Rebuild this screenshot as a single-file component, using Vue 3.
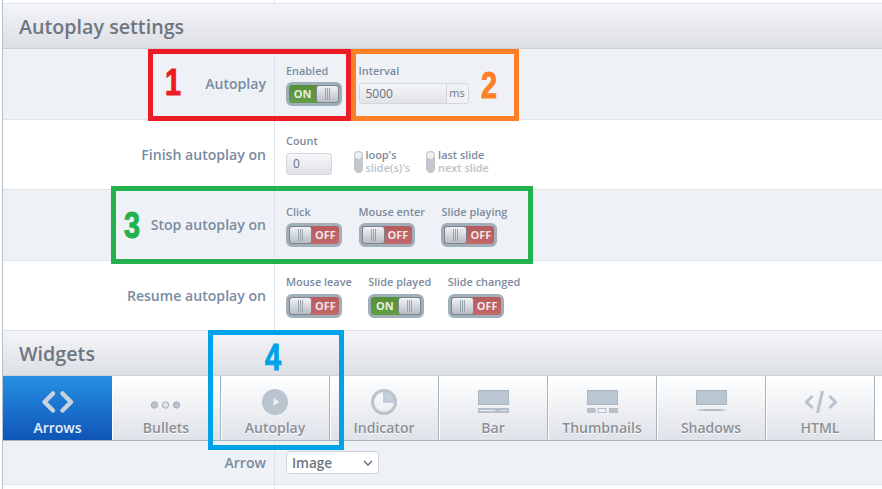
<script setup>
const stopToggles = [
  { name: 'Click', on: false },
  { name: 'Mouse enter', on: false },
  { name: 'Slide playing', on: false }
]
const resumeToggles = [
  { name: 'Mouse leave', on: false },
  { name: 'Slide played', on: true },
  { name: 'Slide changed', on: false }
]
const radios = [
  { top: "loop's", bottom: "slide(s)'s" },
  { top: 'last slide', bottom: 'next slide' }
]
const tabs = ['Arrows', 'Bullets', 'Autoplay', 'Indicator', 'Bar', 'Thumbnails', 'Shadows', 'HTML']
</script>

<template>
  <div class="page">
    <div class="panel">
      <div class="spacer"><div class="col-line"></div></div>
      <h2 class="head">Autoplay settings</h2>

      <div class="row tint">
        <div class="label">Autoplay</div>
        <div class="fields">
          <div class="field">
            <span class="cap">Enabled</span>
            <div class="toggle on">
              <span class="txt">ON</span><span class="knob"><i></i></span>
            </div>
          </div>
          <div class="field">
            <span class="cap">Interval</span>
            <div class="interval">
              <span class="val">5000</span><span class="unit">ms</span>
            </div>
          </div>
        </div>
      </div>

      <div class="row">
        <div class="label">Finish autoplay on</div>
        <div class="fields">
          <div class="field">
            <span class="cap">Count</span>
            <div class="count">0</div>
          </div>
          <div class="radios">
            <div v-for="r in radios" :key="r.top" class="radio">
              <span class="slot"><i></i></span>
              <span class="opts"><b>{{ r.top }}</b><em>{{ r.bottom }}</em></span>
            </div>
          </div>
        </div>
      </div>

      <div class="row tint">
        <div class="label">Stop autoplay on</div>
        <div class="fields">
          <div v-for="t in stopToggles" :key="t.name" class="field">
            <span class="cap">{{ t.name }}</span>
            <div class="toggle">
              <span class="knob"><i></i></span><span class="txt">OFF</span>
            </div>
          </div>
        </div>
      </div>

      <div class="row">
        <div class="label">Resume autoplay on</div>
        <div class="fields">
          <div v-for="t in resumeToggles" :key="t.name" class="field">
            <span class="cap">{{ t.name }}</span>
            <div class="toggle" :class="{ on: t.on }">
              <template v-if="t.on">
                <span class="txt">ON</span><span class="knob"><i></i></span>
              </template>
              <template v-else>
                <span class="knob"><i></i></span><span class="txt">OFF</span>
              </template>
            </div>
          </div>
        </div>
      </div>

      <h2 class="head widgets">Widgets</h2>

      <div class="tabs">
        <div v-for="(t, i) in tabs" :key="t" class="tab" :class="{ active: i === 0 }">
          <svg class="ico" width="40" height="32" viewBox="0 0 40 32">
            <g v-if="t === 'Arrows'" fill="none" stroke="#c9d3de" stroke-width="4.5" stroke-linejoin="round" stroke-linecap="round">
              <path d="M15 7.5 L6.5 16 L15 24.5" />
              <path d="M24.5 7.5 L33 16 L24.5 24.5" />
            </g>
            <g v-else-if="t === 'Bullets'" fill="#b9c4ce" stroke="#a3aeb9">
              <circle cx="8.5" cy="19" r="3.2" />
              <circle cx="19.5" cy="19" r="3.2" fill="#dfe3e8" />
              <circle cx="30.5" cy="19" r="3.2" />
            </g>
            <g v-else-if="t === 'Autoplay'">
              <circle cx="20" cy="16" r="13" fill="#b9c4ce" />
              <path d="M18.5 12 L24.5 16 L18.5 20 Z" fill="#eef0f3" />
            </g>
            <g v-else-if="t === 'Indicator'">
              <path d="M20.5 5 V16 H31.5 A11 11 0 0 0 20.5 5 Z" fill="#c5d0da" />
              <circle cx="20" cy="16" r="11.5" fill="none" stroke="#b9c4ce" stroke-width="3" />
              <path d="M20 5 V16 H31" fill="none" stroke="#b9c4ce" stroke-width="1.6" />
            </g>
            <g v-else-if="t === 'Bar'">
              <rect x="5.5" y="4.5" width="30" height="14" fill="#bac6d1" stroke="#a9b4bf" />
              <rect x="5" y="22" width="31" height="5" fill="#b5c0cb" />
              <rect x="7" y="24" width="15" height="1" fill="#eef0f3" />
              <rect x="28" y="24" width="6" height="1" fill="#dfe3e8" />
            </g>
            <g v-else-if="t === 'Thumbnails'">
              <rect x="5.5" y="4.5" width="30" height="14" fill="#bac6d1" stroke="#a9b4bf" />
              <rect x="5" y="22" width="8.5" height="5" fill="#b5c0cb" />
              <rect x="16" y="22.5" width="8" height="4" fill="#eef0f3" stroke="#b5c0cb" />
              <rect x="27" y="22" width="9" height="5" fill="#b5c0cb" />
            </g>
            <g v-else-if="t === 'Shadows'">
              <rect x="5.5" y="4.5" width="30" height="14" fill="#bac6d1" stroke="#a9b4bf" />
              <ellipse cx="20.5" cy="24" rx="14" ry="1" fill="#aeb7c0" />
            </g>
            <g v-else fill="none" stroke="#b9c4ce" stroke-width="3">
              <path d="M12.5 10 L6.5 16 L12.5 22" />
              <path d="M22.5 5 L17.5 27" />
              <path d="M29.5 10 L35.5 16 L29.5 22" />
            </g>
          </svg>
          <span class="tab-name">{{ t }}</span>
        </div>
      </div>

      <div class="row tint short">
        <div class="label small">Arrow</div>
        <div class="fields middle">
          <div class="select">
            <span>Image</span>
            <svg width="10" height="6" viewBox="0 0 10 6"><path d="M1 1 L5 5 L9 1" fill="none" stroke="#5f6a76" stroke-width="1.4" /></svg>
          </div>
        </div>
      </div>
      <div class="spacer end"><div class="col-line"></div></div>
    </div>

    <div class="mark red"><span>1</span></div>
    <div class="mark orange"><span>2</span></div>
    <div class="mark green"><span>3</span></div>
    <div class="mark blue"><span>4</span></div>
  </div>
</template>

<style>
html, body { margin: 0; background: #fff; }
</style>

<style scoped>
.page {
  position: relative;
  width: 882px;
  height: 489px;
  overflow: hidden;
  background: #fff;
  padding-left: 2px;
  box-sizing: border-box;
  font-family: "Open Sans", sans-serif;
}
.panel {
  border-left: 1px solid #b5c0cb;
  height: 100%;
}
.spacer {
  height: 4px;
  border-bottom: 1px solid #dfe2e6;
  box-sizing: border-box;
  padding-left: 271px;
}
.spacer.end {
  height: 5px;
  border: 0;
}
.col-line {
  width: 1px;
  height: 100%;
  background: #dfe2e6;
}
.head {
  margin: 0;
  height: 45px;
  box-sizing: border-box;
  padding: 9px 0 0 16px;
  font-size: 19.7px;
  line-height: 27px;
  font-weight: 600;
  color: #6e7681;
  background: linear-gradient(#f4f5f9, #dcdfe4);
  border-bottom: 1px solid #cdd1d6;
}
.row {
  display: flex;
  height: 70.5px;
  box-sizing: border-box;
  border-bottom: 1px solid #dfe2e6;
  background: #fff;
}
.row.tint { background: #eef2f6; }
.row.short { height: 44px; }
.label {
  width: 263px;
  flex: none;
  padding-right: 8px;
  text-align: right;
  box-sizing: content-box;
  font-size: 14.1px;
  font-weight: 600;
  color: #7b8ba1;
  line-height: 70px;
}
.label.small { line-height: 43px; }
.fields {
  flex: 1;
  display: flex;
  gap: 16.5px;
  border-left: 1px solid #dfe2e6;
  padding: 14.5px 0 0 11px;
}
.fields.middle {
  padding-top: 10px;
}
.field {
  display: flex;
  flex-direction: column;
  align-items: flex-start;
}
.cap {
  font-size: 10.9px;
  font-weight: 600;
  line-height: 14px;
  color: #7c8a9e;
  margin-bottom: 4.5px;
  white-space: nowrap;
}
.toggle {
  display: flex;
  width: 56px;
  height: 24px;
  box-sizing: border-box;
  border: 3px solid #9fb0ba;
  border-radius: 6px;
  overflow: hidden;
  background: linear-gradient(#b85a5e, #c2696c);
}
.toggle.on { background: linear-gradient(#568f3a, #649d46); }
.knob {
  width: 23px;
  flex: none;
  display: flex;
  align-items: center;
  justify-content: center;
  background: linear-gradient(#f1f2f5, #b9bec6);
  border: 1px solid #7d848e;
  border-radius: 3px;
  box-sizing: border-box;
}
.knob i {
  width: 5px;
  height: 12px;
  background: repeating-linear-gradient(90deg, #9aa3ad 0 1px, transparent 1px 2px);
}
.txt {
  flex: 1;
  text-align: center;
  font-size: 11px;
  font-weight: 700;
  line-height: 18px;
  color: #f0e4e4;
}
.on .txt { color: #e6eee0; }
.interval {
  display: flex;
  width: 110px;
  height: 21px;
  margin-top: 1px;
  box-sizing: border-box;
  border: 1px solid #d3d6da;
  border-radius: 3px;
  overflow: hidden;
}
.val {
  flex: 1;
  padding-left: 6px;
  font-size: 12px;
  line-height: 19px;
  color: #67707b;
  background: linear-gradient(#f5f6f8, #e1e3e8);
}
.unit {
  width: 21px;
  text-align: center;
  font-size: 11px;
  line-height: 18px;
  color: #6f7782;
  border-left: 1px solid #d3d6da;
  background: #f1f2f5;
}
.count {
  width: 46px;
  height: 22px;
  box-sizing: border-box;
  border: 1px solid #d3d6da;
  border-radius: 3px;
  padding-left: 6px;
  font-size: 12px;
  line-height: 20px;
  color: #67707b;
  background: linear-gradient(#f5f6f8, #e1e3e8);
}
.radios {
  display: flex;
  gap: 16px;
  padding: 17px 0 0 5px;
}
.radio {
  display: flex;
  gap: 3px;
}
.slot {
  width: 9px;
  height: 22px;
  border-radius: 5px;
  background: #c3c8ce;
  display: block;
}
.slot i {
  display: block;
  width: 9px;
  height: 9px;
  border-radius: 50%;
  background: #eceef1;
  border: 1px solid #bfc4ca;
  box-sizing: border-box;
}
.opts {
  display: flex;
  flex-direction: column;
  margin-top: -3px;
  font-size: 10.9px;
  line-height: 13px;
  white-space: nowrap;
}
.opts b {
  font-weight: 600;
  color: #7c8a9e;
}
.opts em {
  font-style: normal;
  font-weight: 600;
  color: #bcc1c7;
}
.tabs {
  display: flex;
  height: 65px;
  border-bottom: 1px solid #aab4be;
  box-sizing: border-box;
}
.tab {
  width: 109px;
  flex: none;
  box-sizing: border-box;
  border-right: 1px solid #aab4be;
  box-shadow: inset 1px 0 0 #fff;
  display: flex;
  flex-direction: column;
  align-items: center;
  background: linear-gradient(#fff, #dfe2e8);
  padding-top: 10px;
}
.tab.active {
  background: linear-gradient(#2790e4, #0f55b8);
  border-right: 0;
  box-shadow: none;
}
.ico { flex: none; }
.tab-name {
  font-size: 14px;
  font-weight: 600;
  line-height: 18px;
  margin-top: 1px;
  color: #8b8f96;
  text-shadow: 0 1px 0 #fff;
}
.tab.active .tab-name {
  color: #e8eef6;
  text-shadow: none;
}
.select {
  width: 93px;
  height: 23px;
  box-sizing: border-box;
  border: 1px solid #cfd3d8;
  border-radius: 4px;
  background: #fff;
  display: flex;
  align-items: center;
  justify-content: space-between;
  padding: 0 5px;
  font-size: 13.5px;
  font-weight: 600;
  color: #6b7480;
}
.mark {
  position: absolute;
  box-sizing: border-box;
  border: 5px solid;
  font-family: "Liberation Sans", sans-serif;
  font-weight: 700;
  font-size: 36px;
  line-height: 1;
}
.mark span {
  position: absolute;
  transform: scaleX(0.8);
  transform-origin: left top;
  -webkit-text-stroke: 1px currentColor;
}
.red { left: 148px; top: 49px; width: 203px; height: 72px; border-color: #ed1c24; color: #ed1c24; }
.red span { left: 12px; top: 11px; }
.orange { left: 351px; top: 49px; width: 168px; height: 72px; border-color: #ff7f27; color: #ff7f27; }
.orange span { left: 125px; top: 14px; }
.green { left: 111px; top: 186px; width: 422px; height: 78px; border-color: #22b14c; color: #22b14c; }
.green span { left: 8px; top: 17px; }
.blue { left: 208px; top: 330px; width: 136px; height: 120px; border-color: #00a2e8; color: #00a2e8; }
.blue span { left: 52px; top: 5px; }
</style>
